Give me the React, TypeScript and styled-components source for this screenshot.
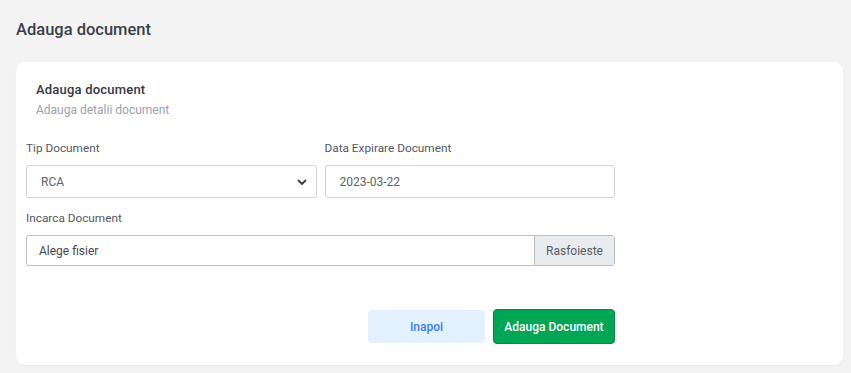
import React from 'react';
import styled, { createGlobalStyle } from 'styled-components';

const GlobalStyle = createGlobalStyle`
    body {
        margin: 0;
        background: #f3f3f3;
        font-family: Roboto, "Liberation Sans", sans-serif;
    }
`;

const Page = styled.div`
    padding: 20px 8px 10px 16px;
`;

const PageTitle = styled.h1`
    margin: 0 0 22px;
    font-size: 16.5px;
    line-height: 20px;
    font-weight: 500;
    color: #3a3f47;
`;

const Card = styled.div`
    background: #fff;
    border-radius: 9px;
    padding: 19px 10px 21px 10px;
    box-shadow: 0 1px 2px rgba(0, 0, 0, 0.04);
`;

const CardHeader = styled.div`
    padding: 0 10px;
    margin-bottom: 22px;
`;

const CardTitle = styled.div`
    font-size: 13px;
    line-height: 18px;
    font-weight: 500;
    letter-spacing: 0.2px;
    color: #33373c;
`;

const CardSubtitle = styled.div`
    font-size: 12px;
    line-height: 18px;
    color: #9aa3ad;
    margin-top: 2px;
`;

const Form = styled.div`
    width: 589px;
    display: grid;
    grid-template-columns: 1fr 1fr;
    column-gap: 8px;
    row-gap: 13px;
`;

const Field = styled.div<{ wide?: boolean }>`
    grid-column: ${({ wide }) => (wide ? '1 / -1' : 'auto')};
    display: flex;
    flex-direction: column;
`;

const Label = styled.label`
    font-size: 11.8px;
    line-height: 14px;
    font-weight: 400;
    color: #52585e;
    margin-bottom: 10px;
`;

const Box = styled.div`
    height: 33px;
    box-sizing: border-box;
    border: 1px solid #ced4da;
    border-radius: 3px;
    display: flex;
    align-items: center;
    font-size: 12px;
    color: #5c636a;
`;

const BoxText = styled.span`
    flex: 1;
    padding-left: 14px;
`;

const Chevron = styled.svg`
    width: 12px;
    height: 12px;
    margin-right: 8px;
`;

const FileBox = styled(Box)`
    height: 31px;
    border-color: #b8bec5;
`;

const FileText = styled.span`
    flex: 1;
    padding-left: 12px;
    color: #444a50;
`;

const BrowseButton = styled.span`
    align-self: stretch;
    width: 79px;
    display: flex;
    align-items: center;
    justify-content: center;
    background: #e9ecef;
    border-left: 1px solid #b8bec5;
    color: #555b62;
`;

const Actions = styled.div`
    width: 589px;
    display: flex;
    justify-content: flex-end;
    align-items: center;
    gap: 8px;
    margin-top: 43px;
`;

const Button = styled.button<{ primary?: boolean }>`
    font-family: inherit;
    font-size: 12px;
    font-weight: 500;
    border-radius: 4px;
    cursor: pointer;
    height: ${({ primary }) => (primary ? '35px' : '33px')};
    padding: 0;
    width: ${({ primary }) => (primary ? '122px' : '117px')};
    background: ${({ primary }) => (primary ? '#00a653' : '#e3f1ff')};
    color: ${({ primary }) => (primary ? '#fff' : '#3b7ff2')};
    border: 1px solid ${({ primary }) => (primary ? '#07873f' : '#e3f1ff')};
`;

export default function App() {
    return (
        <>
            <GlobalStyle />
            <Page>
                <PageTitle>Adauga document</PageTitle>
                <Card>
                    <CardHeader>
                        <CardTitle>Adauga document</CardTitle>
                        <CardSubtitle>Adauga detalii document</CardSubtitle>
                    </CardHeader>
                    <Form>
                        <Field>
                            <Label>Tip Document</Label>
                            <Box>
                                <BoxText>RCA</BoxText>
                                <Chevron viewBox="0 0 12 12">
                                    <path d="M2.5 4.5 L6 8 L9.5 4.5" fill="none" stroke="#3a3f45" strokeWidth="1.8" strokeLinecap="round" strokeLinejoin="round" />
                                </Chevron>
                            </Box>
                        </Field>
                        <Field>
                            <Label>Data Expirare Document</Label>
                            <Box>
                                <BoxText>2023-03-22</BoxText>
                            </Box>
                        </Field>
                        <Field wide>
                            <Label>Incarca Document</Label>
                            <FileBox>
                                <FileText>Alege fisier</FileText>
                                <BrowseButton>Rasfoieste</BrowseButton>
                            </FileBox>
                        </Field>
                    </Form>
                    <Actions>
                        <Button>Inapoi</Button>
                        <Button primary>Adauga Document</Button>
                    </Actions>
                </Card>
            </Page>
        </>
    );
}
